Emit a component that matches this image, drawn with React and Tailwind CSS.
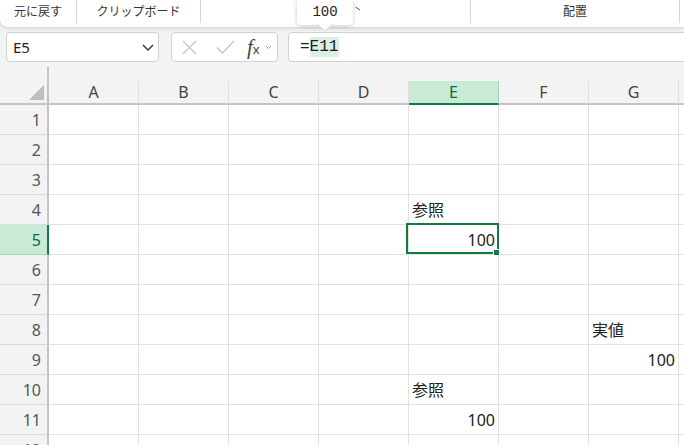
import clsx from 'clsx';

const COLS = ['A', 'B', 'C', 'D', 'E', 'F', 'G', 'H'];
const ROWS = [1, 2, 3, 4, 5, 6, 7, 8, 9, 10, 11, 12];

// sheet contents keyed by address
const CELLS = {
    E4: { value: '参照' },
    E5: { value: '100', num: true },
    G8: { value: '実値' },
    G9: { value: '100', num: true },
    E10: { value: '参照' },
    E11: { value: '100', num: true },
};

const ACTIVE_COL = 'E';
const ACTIVE_ROW = 5;

function Ribbon() {
    return (
        <div className="relative h-[27px] bg-white rounded-bl-[8px] shadow-[0_1px_4px_rgba(0,0,0,0.16)] flex text-[12px] text-[#333]">
            <div className="w-[77px] h-[23px] shrink-0 border-r border-[#d6d6d6] flex items-center justify-center">元に戻す</div>
            <div className="w-[124px] h-[23px] shrink-0 border-r border-[#d6d6d6] flex items-center justify-center">クリップボード</div>
            <div className="w-[270px] h-[23px] shrink-0 border-r border-[#d6d6d6] flex items-start pl-[154px] pt-[6px]">
                {/* group label hidden under the preview, only its tail shows */}
                <svg width="6" height="5" viewBox="0 0 6 5">
                    <path d="M0.5 1 L5 4" fill="none" stroke="#555" strokeWidth="1" />
                </svg>
            </div>
            <div className="w-[209px] h-[23px] shrink-0 border-r border-[#d6d6d6] flex items-center justify-center">配置</div>

            {/* value preview over the ribbon */}
            <div className="absolute left-[297px] top-0 w-[56px] h-[25px] bg-white rounded-b-[4px] shadow-[0_1px_4px_rgba(0,0,0,0.22)] flex items-center justify-center font-['Liberation_Mono',monospace] text-[14px] text-[#222]">
                100
                <svg className="absolute left-[20px] top-[24px]" width="16" height="8" viewBox="0 0 16 8">
                    <path d="M0 0 L8 7 L16 0 Z" fill="#fff" />
                    <path d="M0 0 L8 7 L16 0" fill="none" stroke="#d8d8d8" strokeWidth="1" />
                </svg>
            </div>
        </div>
    );
}

function FormulaBar() {
    return (
        <div className="flex h-[30px] mt-[5px]">
            <div className="ml-[6px] w-[153px] shrink-0 bg-white border border-[#d1d1d1] rounded-[4px] flex items-center justify-between pl-[6px] pr-[4px]">
                <span className="text-[15px] text-[#222]">E5</span>
                <svg width="12" height="7" viewBox="0 0 12 7">
                    <path d="M1 1 L6 6 L11 1" fill="none" stroke="#333" strokeWidth="1.4" />
                </svg>
            </div>

            <div className="ml-[12px] w-[107px] shrink-0 bg-white border border-[#d1d1d1] rounded-[4px] flex items-center pl-[10px]">
                <svg width="15" height="15" viewBox="0 0 15 15">
                    <path d="M1 1 L14 14 M14 1 L1 14" fill="none" stroke="#c4c4c4" strokeWidth="1.3" />
                </svg>
                <svg className="ml-[19px]" width="19" height="14" viewBox="0 0 19 14">
                    <path d="M1 7.5 L6.5 13 L18 1" fill="none" stroke="#c4c4c4" strokeWidth="1.3" />
                </svg>
                <span className="ml-[12px] font-['Liberation_Serif',serif] italic text-[21px] leading-none text-[#444]">
                    f<span className="not-italic font-['Noto_Sans',sans-serif] text-[13px]">x</span>
                </span>
                <svg className="ml-[5px]" width="7" height="5" viewBox="0 0 7 5">
                    <path d="M1 1 L3.5 3.5 L6 1" fill="none" stroke="#999" strokeWidth="1" />
                </svg>
            </div>

            <div className="ml-[10px] -mr-[8px] flex-1 bg-white border border-[#d1d1d1] rounded-[4px] flex items-center pl-[11px] font-['Liberation_Mono',monospace] text-[16px] text-[#1b1b1b]">
                <span>=</span>
                <span className="bg-[#dcefe3] leading-[20px] pr-[1px]">E11</span>
            </div>
        </div>
    );
}

function HeaderRow() {
    return (
        <div className="flex h-[43px] items-end">
            <div className="w-[49px] h-[38px] shrink-0 border-r-2 border-b-2 border-[#c4c4c4] flex items-end justify-end pr-[3px] pb-[3px]">
                <svg width="15" height="15" viewBox="0 0 15 15">
                    <path d="M15 0 L15 15 L0 15 Z" fill="#bdbdbd" />
                </svg>
            </div>
            {COLS.map((c) => (
                <div
                    key={c}
                    className={clsx(
                        'w-[90px] h-[24px] shrink-0 border-r border-b-2 flex items-center justify-center text-[16px]',
                        c === ACTIVE_COL
                            ? 'bg-[#caead8] border-r-[#9fd5b6] border-b-[#107c41] text-[#0e6a36]'
                            : 'border-r-[#dedede] border-b-[#c4c4c4] text-[#444]'
                    )}
                >
                    {c}
                </div>
            ))}
        </div>
    );
}

function Cell({ col, row }) {
    const cell = CELLS[`${col}${row}`];
    const active = col === ACTIVE_COL && row === ACTIVE_ROW;
    return (
        <div
            className={clsx(
                'relative w-[90px] shrink-0 bg-white border-r border-b border-[#e1e1e1] flex items-center px-[3px] text-[16px] text-[#222] whitespace-nowrap',
                cell?.num && 'justify-end'
            )}
        >
            {cell?.value}
            {active && (
                <>
                    <div className="absolute -left-[3px] -top-[2px] -right-[1px] bottom-0 border-2 border-[#107c41]" />
                    <div className="absolute -right-[3px] -bottom-[3px] w-[6px] h-[6px] bg-[#107c41] border border-white box-content" />
                </>
            )}
        </div>
    );
}

function SheetRow({ row }) {
    const active = row === ACTIVE_ROW;
    return (
        <div className="flex h-[30px]">
            <div
                className={clsx(
                    'w-[49px] shrink-0 border-r-2 border-b flex items-center justify-end pr-[6px] text-[16px]',
                    active
                        ? 'bg-[#caead8] border-r-[#107c41] border-b-[#9fd5b6] text-[#0e6a36]'
                        : 'border-r-[#c4c4c4] border-b-[#dadada] text-[#555]'
                )}
            >
                {row}
            </div>
            {COLS.map((c) => (
                <Cell key={c} col={c} row={row} />
            ))}
        </div>
    );
}

export default function App() {
    return (
        <div className="w-[684px] h-[445px] overflow-hidden bg-[#f3f3f3] font-['Noto_Sans','Noto_Sans_CJK_JP',sans-serif]">
            <Ribbon />
            <FormulaBar />
            <HeaderRow />
            {ROWS.map((r) => (
                <SheetRow key={r} row={r} />
            ))}
        </div>
    );
}
